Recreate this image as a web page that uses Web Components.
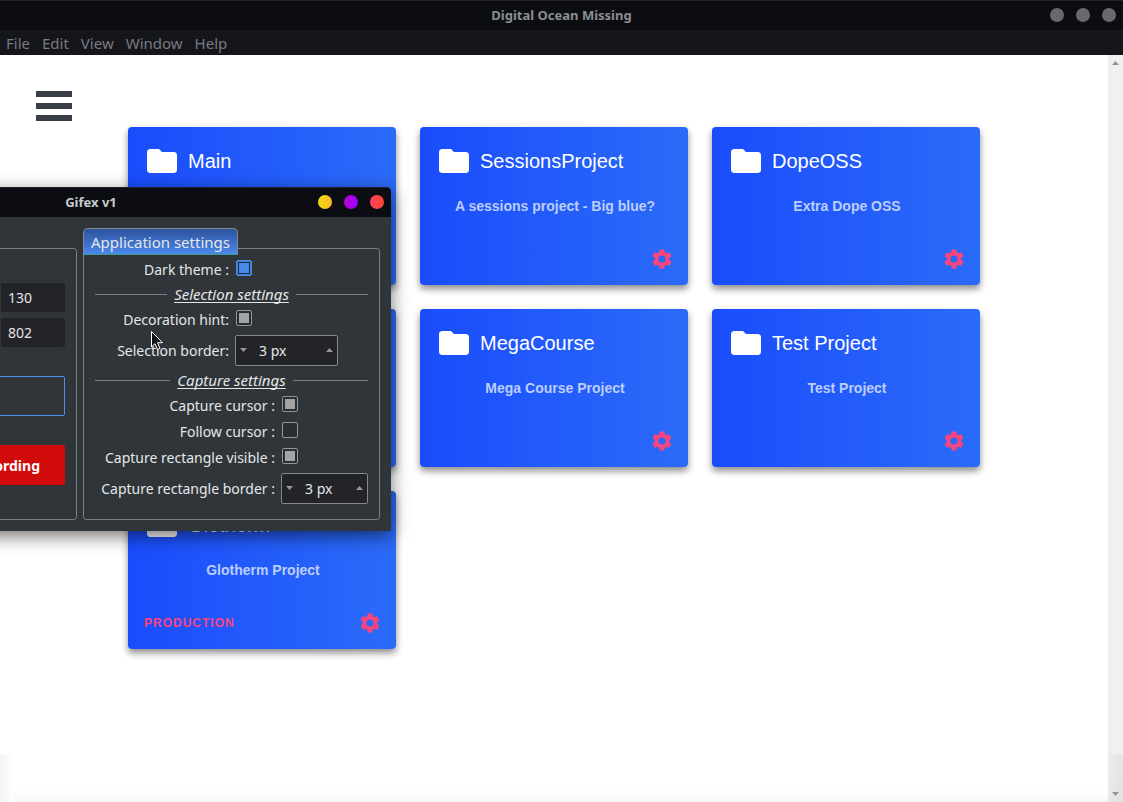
<!DOCTYPE html>
<html lang="en">
<head>
<meta charset="utf-8">
<title>Digital Ocean Missing</title>
<style>
html, body { margin: 0; min-height: 100%; }
body { font-family: "Noto Sans", "Open Sans", sans-serif; font-size: 14px; background: #fff; }
</style>
</head>
<body>
<app-window></app-window>
<script>
function define(name, html, setup) {
  const template = document.createElement('template');
  template.innerHTML = html;
  customElements.define(name, class extends HTMLElement {
    connectedCallback() {
      if (this.shadowRoot) return;
      const root = this.attachShadow({ mode: 'open' });
      root.append(template.content.cloneNode(true));
      if (setup) setup(this, root);
    }
  });
}

define('title-bar', `
<style>
:host { display: block; background: #0c0d12; color: var(--title-color, #8b8d92); }
header { display: grid; grid-template-columns: 1fr auto 1fr; align-items: center; height: 30px; padding: 0 7px; box-shadow: inset 0 1px #202228; }
h1 { grid-column: 2; margin: 0; font-size: 13px; line-height: 18px; font-weight: 700; }
.controls { display: flex; justify-content: flex-end; gap: 12px; }
button { width: 14px; height: 14px; padding: 0; border: 0; border-radius: 50%; }
.min { background: var(--min, #68696c); }
.max { background: var(--max, #68696c); }
.close { background: var(--close, #68696c); }
</style>
<header>
  <h1><slot></slot></h1>
  <div class="controls">
    <button class="min" aria-label="Minimize"></button>
    <button class="max" aria-label="Maximize"></button>
    <button class="close" aria-label="Close"></button>
  </div>
</header>`);

define('menu-bar', `
<style>
:host { display: block; background: #15161b; }
nav { display: flex; align-items: center; gap: 12px; height: 25px; padding: 0 6px; }
button { border: 0; padding: 0; background: none; color: #797b80; font: inherit; font-size: 15px; line-height: 20px; }
</style>
<nav><button>File</button><button>Edit</button><button>View</button><button>Window</button><button>Help</button></nav>`);

define('project-card', `
<style>
:host { display: block; }
article { display: flex; flex-direction: column; height: 158px; box-sizing: border-box; padding: 16px 14px 14px 16px; border-radius: 4px;
  background: linear-gradient(90deg, #1a4cfc, #2b6bf8); box-shadow: 0 4px 7px rgba(0,0,0,.45);
  font-family: "Liberation Sans", Arial, sans-serif; }
.head { display: flex; align-items: center; gap: 8px; height: 36px; color: #fff; }
.head svg { width: 36px; height: 36px; flex: none; }
h2 { margin: 0; font-size: 20px; line-height: 24px; font-weight: 400; }
p { margin: 19px 0 0; font-size: 14px; line-height: 16px; font-weight: 700; text-align: center; color: #bccefe; }
footer { display: flex; align-items: center; justify-content: space-between; margin-top: auto; color: #f9447c; }
.env { font-size: 12px; line-height: 14px; font-weight: 700; letter-spacing: 1px; }
button { width: 24px; height: 24px; padding: 0; border: 0; background: none; color: inherit; }
button svg { display: block; width: 24px; height: 24px; }
</style>
<article>
  <div class="head">
    <svg viewBox="0 0 24 24" fill="currentColor" aria-hidden="true"><path d="M10 4H4c-1.100 0-2 .9-2 2v12c0 1.100.9 2 2 2h16c1.100 0 2-.9 2-2V8c0-1.100-.9-2-2-2h-8z"/></svg>
    <h2></h2>
  </div>
  <p></p>
  <footer><span class="env"></span>
    <button aria-label="Project settings"><svg viewBox="0 0 24 24" fill="currentColor" aria-hidden="true"><path d="M19.140 12.940c.04-.3.060-.61.060-.94s-.02-.64-.07-.94l2.030-1.580a.49.49 0 0 0 .12-.61l-1.920-3.320a.49.49 0 0 0-.59-.22l-2.390.96a7 7 0 0 0-1.620-.94l-.36-2.540a.48.48 0 0 0-.48-.41h-3.840a.47.47 0 0 0-.47.41l-.36 2.540c-.59.24-1.130.57-1.620.94l-2.390-.96a.48.48 0 0 0-.59.22L2.740 8.870a.47.47 0 0 0 .12.61l2.030 1.580c-.05.3-.09.63-.09.94s.02.64.07.94l-2.030 1.580a.49.49 0 0 0-.12.61l1.920 3.320c.12.22.37.29.59.22l2.390-.96c.5.38 1.030.7 1.620.94l.36 2.540c.05.24.24.41.48.41h3.840c.24 0 .44-.17.47-.41l.36-2.540a7 7 0 0 0 1.620-.94l2.390.96c.22.08.47 0 .59-.22l1.920-3.320a.47.47 0 0 0-.12-.61zM12 15.600A3.600 3.600 0 1 1 12 8.400a3.600 3.600 0 0 1 0 7.200z"/></svg></button>
  </footer>
</article>`, (host, root) => {
  root.querySelector('h2').textContent = host.getAttribute('name') || '';
  root.querySelector('p').textContent = host.getAttribute('description') || '';
  root.querySelector('.env').textContent = host.getAttribute('environment') || '';
});

define('scroll-rail', `
<style>
:host { display: flex; flex-direction: column; justify-content: space-between; width: 15px; flex: none;
  background: linear-gradient(100deg, #eceeed, #dfe2e1) bottom / 100% 48px no-repeat #eff1f0; }
svg { display: block; width: 15px; height: 16px; fill: #929595; }
</style>
<svg viewBox="0 0 15 16" aria-hidden="true"><path d="M4 10l3.500-4 3.500 4z"/></svg>
<svg viewBox="0 0 15 16" aria-hidden="true"><path d="M4 6l3.500 4L11 6z"/></svg>`);

define('project-board', `
<style>
:host { display: block; flex: 1; min-width: 0;
  background: linear-gradient(90deg, #f4f4f4, #fff) left bottom / 14px 48px no-repeat,
    linear-gradient(0deg, #f7f7f7, #fff) left bottom / 100% 12px no-repeat, #fff; }
.menu { display: flex; flex-direction: column; gap: 6px; margin: 36px 0 6px 36px; width: 36px; padding: 0; border: 0; background: none; }
.menu i { height: 6px; width: 36px; background: #3a3e46; }
.grid { display: grid; grid-template-columns: repeat(3, minmax(0, 1fr)); gap: 24px; padding: 0 128px 128px; }
.first { grid-column: 1; }
</style>
<button class="menu" aria-label="Open menu"><i></i><i></i><i></i></button>
<div class="grid">
  <project-card name="Main"></project-card>
  <project-card name="SessionsProject" description="A sessions project - Big blue?"></project-card>
  <project-card name="DopeOSS" description="Extra Dope OSS"></project-card>
  <project-card></project-card>
  <project-card name="MegaCourse" description="Mega Course Project"></project-card>
  <project-card name="Test Project" description="Test Project"></project-card>
  <project-card class="first" name="Glotherm" description="Glotherm Project" environment="PRODUCTION"></project-card>
</div>`);

define('check-row', `
<style>
:host { display: block; }
label { display: grid; grid-template-columns: var(--label-width) auto; justify-content: start; align-items: center; column-gap: 7px; height: 26px; box-sizing: border-box; padding-top: 2px; }
span { text-align: right; line-height: 20px; white-space: nowrap; }
input { appearance: none; display: grid; place-items: center; margin: 0 0 4px; width: 16px; height: 16px; box-sizing: border-box; border: 1px solid #94979a; border-radius: 2px; background: #2a2d33; }
input:checked::before { content: ""; width: 10px; height: 10px; background: #a3a3a3; }
:host([accent]) input { border: 2px solid #4586de; background: #172c38; }
:host([accent]) input::before { background: #4a8ae8; }
</style>
<label><span></span><input type="checkbox"></label>`, (host, root) => {
  root.querySelector('span').textContent = host.getAttribute('label');
  root.querySelector('input').checked = host.hasAttribute('checked');
});

define('spin-row', `
<style>
:host { display: block; }
.row { display: grid; grid-template-columns: var(--label-width) var(--spin-width); align-items: center; column-gap: 6px; height: 36px; }
label { padding-top: 2px; text-align: right; line-height: 20px; white-space: nowrap; }
.spin { display: flex; height: 31px; box-sizing: border-box; border: 1px solid #85888a; border-radius: 2px; background: #232428; }
button { width: 15px; padding: 0; border: 0; background: none; display: grid; place-items: center; }
svg { width: 7px; height: 4px; fill: #96999c; }
input { flex: 1; width: 0; padding: 0 0 0 8px; border: 0; background: none; color: inherit; font: inherit; font-size: 14px; }
</style>
<div class="row"><label for="value"></label>
<div class="spin">
  <button aria-label="Decrease"><svg viewBox="0 0 7 4"><path d="M0 0h7L3.500 4z"/></svg></button>
  <input id="value" type="text">
  <button aria-label="Increase"><svg viewBox="0 0 7 4"><path d="M0 4h7L3.500 0z"/></svg></button>
</div></div>`, (host, root) => {
  root.querySelector('label').textContent = host.getAttribute('label');
  root.querySelector('input').value = host.getAttribute('value');
});

define('section-rule', `
<style>
:host { display: flex; align-items: center; gap: 7px; height: 24px; font-size: 15px; font-style: italic; white-space: nowrap; }
:host::before, :host::after { content: ""; flex: 1; height: 1px; background: #7b7e80; }
span { line-height: 20px; text-decoration: underline; text-decoration-skip-ink: none; text-underline-offset: 2px; }
</style>
<span><slot></slot></span>`);

define('settings-dialog', `
<style>
:host { display: block; width: 600px; color: #e4e6e8; background: #303539; border-radius: 5px 5px 0 0; box-shadow: 0 5px 18px rgba(0,0,0,.55); }
title-bar { --title-color: #c8cacd; --min: linear-gradient(90deg,#f0dc10,#ffb62a); --max: linear-gradient(90deg,#c000d0,#9600ff); --close: linear-gradient(90deg,#ff4266,#ff452a); border-radius: 5px 5px 0 0; overflow: hidden; }
.body { display: flex; gap: 6px; padding: 11px; }
.panel { box-sizing: border-box; border: 1px solid #7b7e80; border-radius: 3px; }
.capture { flex: 1; margin-top: 20px; padding: 34px 11px 0; display: flex; flex-direction: column; align-items: flex-end; }
input { width: 64px; height: 29px; box-sizing: border-box; border: 0; border-radius: 2px; padding: 0 7px; margin-bottom: 6px; background: #222327; color: inherit; font: inherit; font-size: 14px; }
.area { width: 100%; height: 40px; box-sizing: border-box; margin: 23px 0 29px; border: 1px solid #4b91eb; border-radius: 2px; background: none; }
.record { width: 100%; height: 40px; border: 0; border-radius: 2px; background: #d10a0a; color: #fff; font: inherit; font-size: 14px; font-weight: 700; text-align: right; padding: 0 25px; }
.application { width: 297px; }
.tab { position: relative; display: block; height: 27px; padding: 0 7px; margin-bottom: -7px; border: 1px solid #85888a; border-bottom: 1px solid #3c9c86; border-radius: 5px 5px 0 0; background: linear-gradient(#2d529d, #4a88ec); color: inherit; font: inherit; font-size: 15px; line-height: 20px; }
.settings { height: 272px; padding: 7px 11px 10px; border-top-left-radius: 0; }
.selection { --label-width: 134px; --spin-width: 103px; }
.capture-options { --label-width: 180px; --spin-width: 87px; }
</style>
<title-bar>Gifex v1</title-bar>
<div class="body">
  <div class="panel capture">
    <input type="text" value="130" aria-label="Position">
    <input type="text" value="802" aria-label="Size">
    <button class="area" aria-label="Select area"></button>
    <button class="record">Recording</button>
  </div>
  <div class="application">
    <button class="tab">Application settings</button>
    <div class="panel settings">
      <div class="selection">
        <check-row accent checked label="Dark theme :"></check-row>
        <section-rule>Selection settings</section-rule>
        <check-row checked label="Decoration hint:"></check-row>
        <spin-row label="Selection border:" value="3 px"></spin-row>
      </div>
      <div class="capture-options">
        <section-rule>Capture settings</section-rule>
        <check-row checked label="Capture cursor :"></check-row>
        <check-row label="Follow cursor :"></check-row>
        <check-row checked label="Capture rectangle visible :"></check-row>
        <spin-row label="Capture rectangle border :" value="3 px"></spin-row>
      </div>
    </div>
  </div>
</div>`);

define('app-window', `
<style>
:host { position: relative; display: flex; flex-direction: column; min-height: 100vh; overflow: hidden; }
main { display: flex; flex: 1; }
settings-dialog { position: absolute; left: -209px; top: 187px; }
.pointer { position: absolute; left: 150px; top: 330px; width: 14px; height: 21px; }
</style>
<title-bar>Digital Ocean Missing</title-bar>
<menu-bar></menu-bar>
<main><project-board></project-board><scroll-rail></scroll-rail></main>
<settings-dialog></settings-dialog>
<svg class="pointer" viewBox="0 0 14 21" aria-hidden="true"><path d="M1.500 1.500v15.500l3.500-3.300 2.500 5.800 2.500-1.100-2.500-5.700h5z" fill="#111" stroke="#fff"/></svg>`);
</script>
</body>
</html>
